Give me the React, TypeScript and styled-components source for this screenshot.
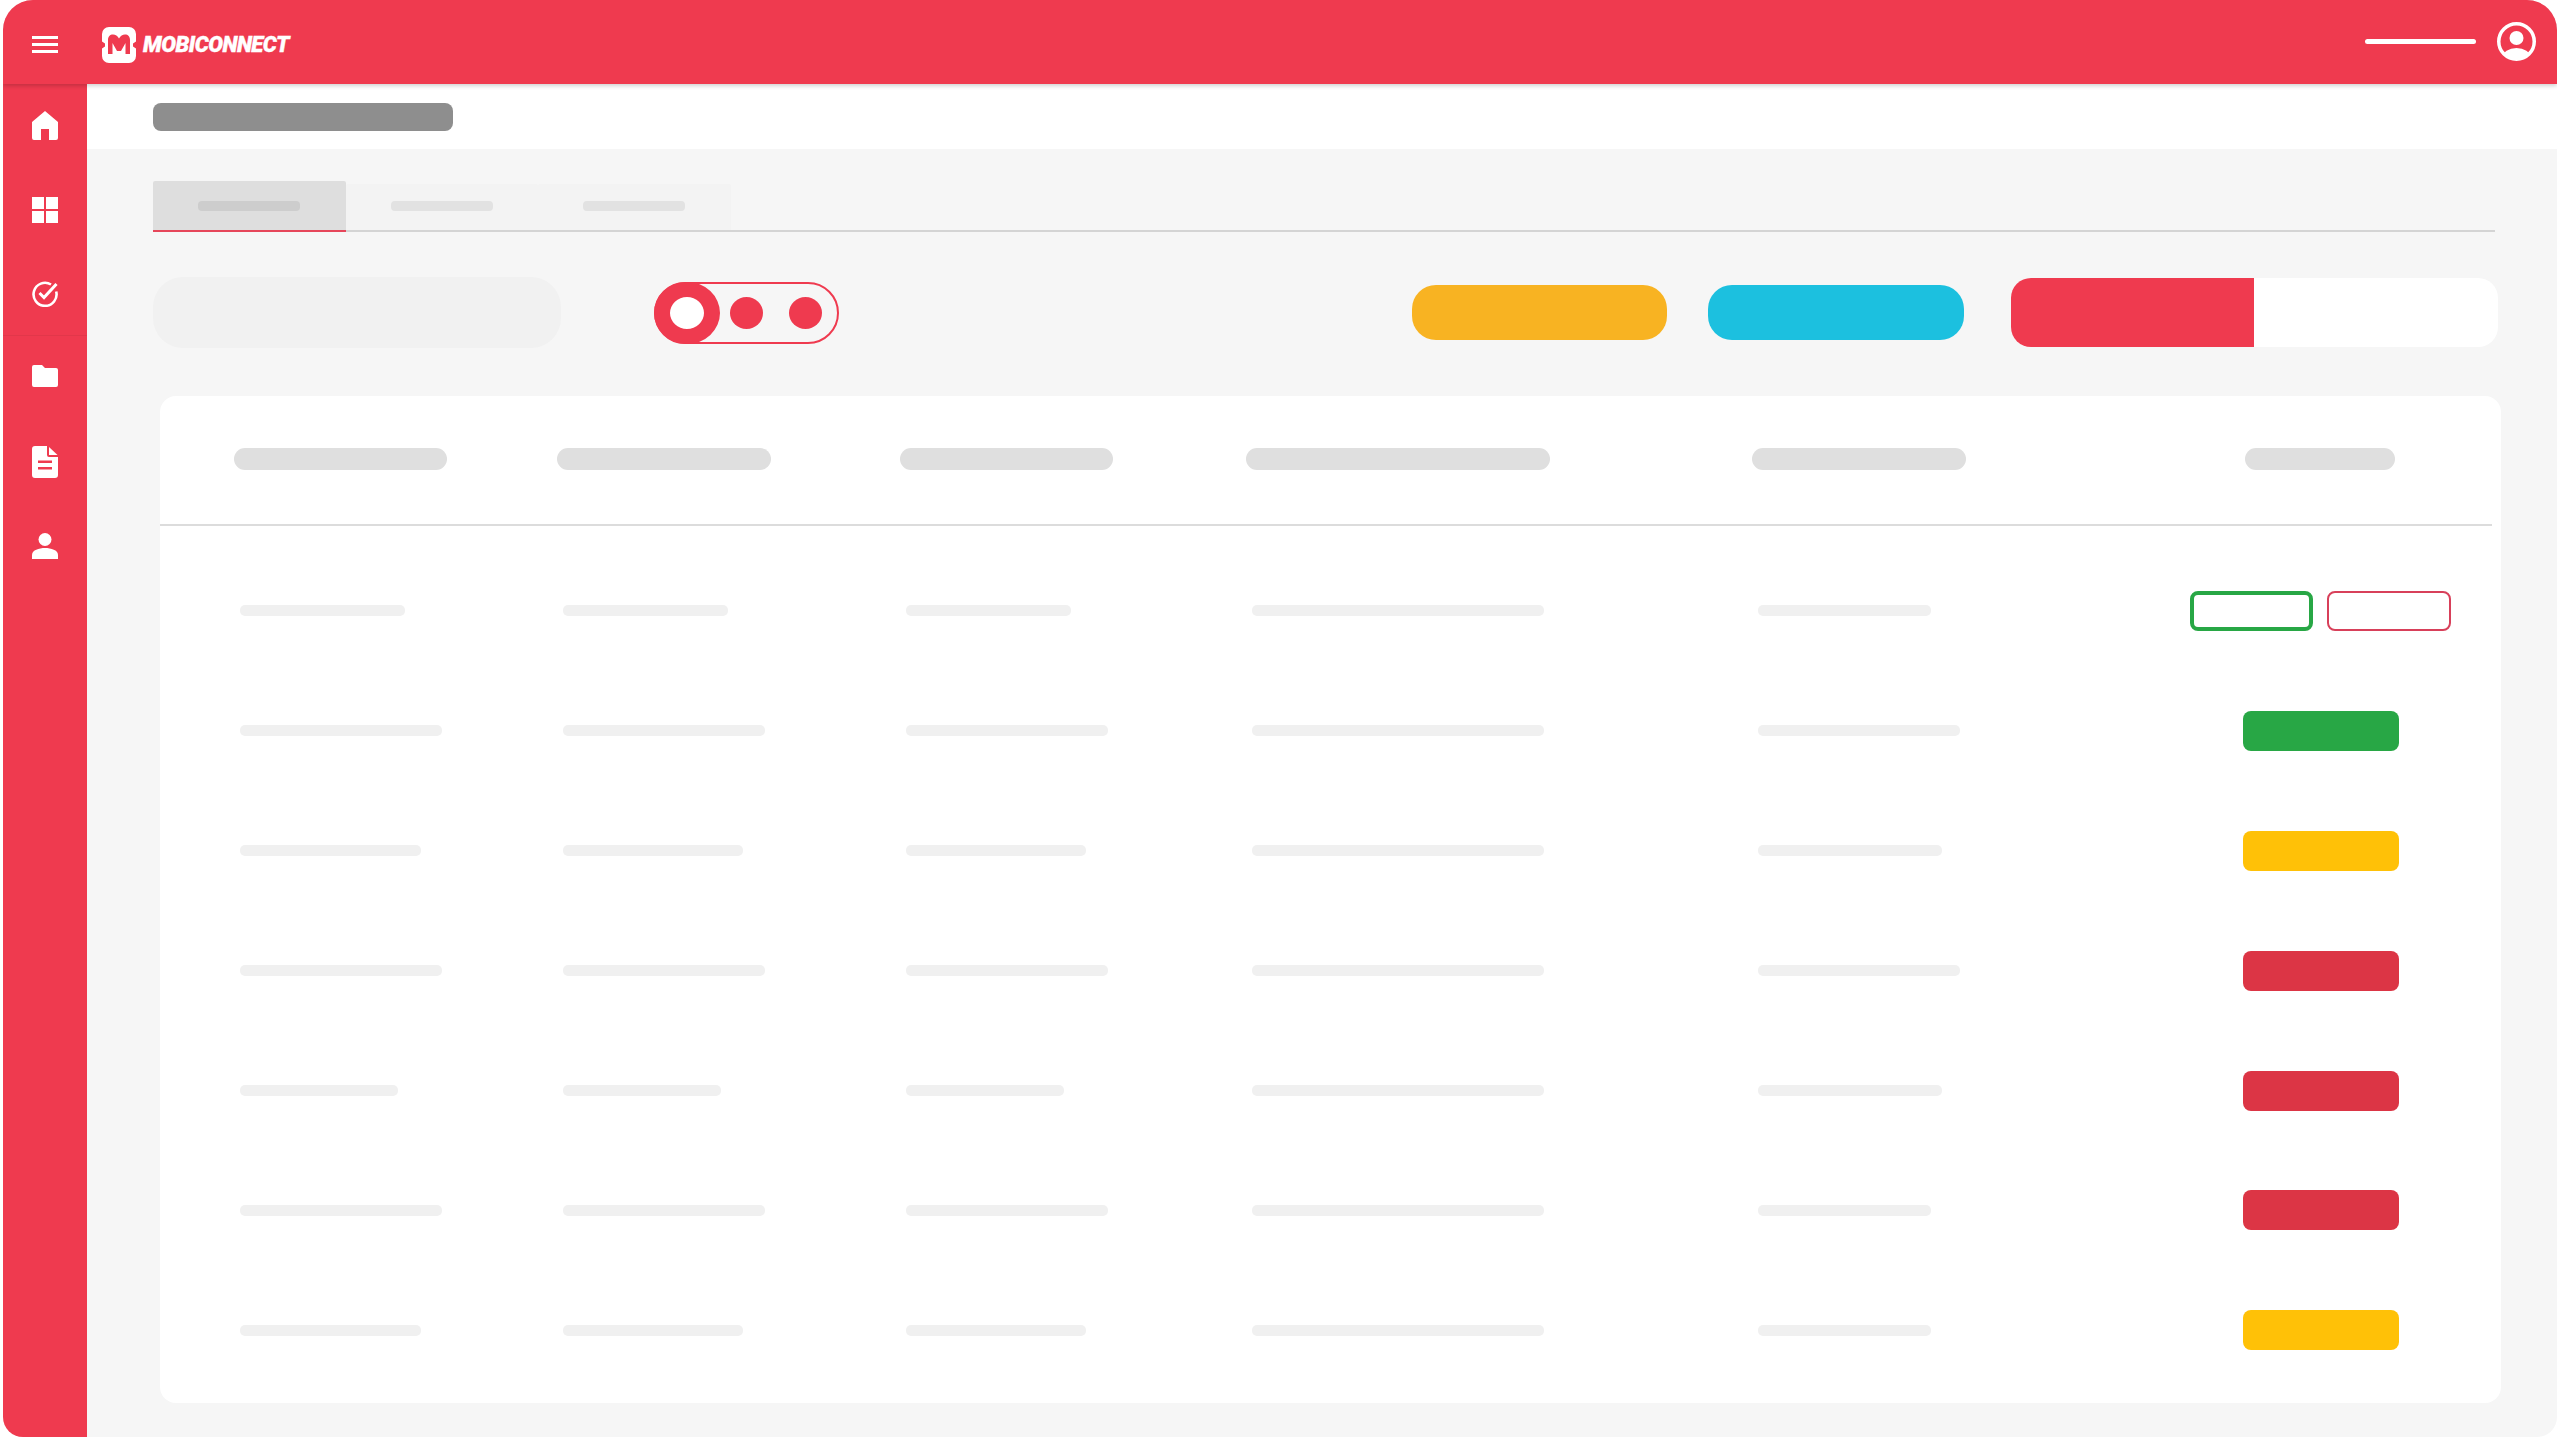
import React from "react";
import styled, { createGlobalStyle } from "styled-components";

const Global = createGlobalStyle`
  html, body { margin: 0; padding: 0; background: #fff; }
  #root { width: 2560px; height: 1437px; }
`;

const RED = "#ef3a4f";

const Frame = styled.div`
  width: 2554px;
  height: 1437px;
  margin-left: 3px;
  border-radius: 30px 30px 20px 20px;
  overflow: hidden;
  display: flex;
  flex-direction: column;
  background: #f6f6f6;
`;

const Header = styled.header`
  position: relative;
  z-index: 2;
  flex: 0 0 84px;
  display: flex;
  align-items: center;
  justify-content: space-between;
  padding: 0 21px 0 29px;
  background: ${RED};
  box-shadow: 0 2px 4px rgba(0, 0, 0, 0.18);
`;

const HeaderLeft = styled.div`
  display: flex;
  align-items: center;
  margin-top: 5px;
`;

const Burger = styled.div`
  width: 26px;
  display: flex;
  flex-direction: column;
  gap: 4px;
  margin-right: 44px;
`;

const BurgerLine = styled.span`
  display: block;
  height: 3px;
  background: #fff;
`;

const Brand = styled.div`
  display: flex;
  align-items: center;
  gap: 7px;
`;

const BrandName = styled.span`
  font-family: Roboto, "Liberation Sans", sans-serif;
  font-weight: 900;
  font-style: italic;
  font-size: 22px;
  line-height: 24px;
  letter-spacing: -0.5px;
  -webkit-text-stroke: 0.4px #fff;
  color: #fff;
`;

const HeaderRight = styled.div`
  display: flex;
  align-items: center;
  gap: 21px;
  margin-top: -1px;
`;

const UserLine = styled.span`
  display: block;
  width: 111px;
  height: 5px;
  border-radius: 3px;
  background: #fff;
`;

const Body = styled.div`
  flex: 1;
  display: flex;
  min-height: 0;
`;

const Sidebar = styled.nav`
  flex: 0 0 84px;
  background: ${RED};
  display: flex;
  flex-direction: column;
`;

const NavItem = styled.div<{ $sep?: boolean; $lift?: boolean }>`
  height: 84px;
  box-sizing: border-box;
  display: flex;
  align-items: center;
  justify-content: center;
  padding-bottom: ${(p) => (p.$lift ? "3px" : "0")};
  border-bottom: 1px solid ${(p) => (p.$sep ? "rgba(0,0,0,0.05)" : "transparent")};
`;

const Main = styled.main`
  flex: 1;
  min-width: 0;
  display: flex;
  flex-direction: column;
`;

const TitleBar = styled.div`
  flex: 0 0 65px;
  background: #fff;
  padding: 19px 0 0 66px;
  box-sizing: border-box;
`;

const Title = styled.div`
  width: 300px;
  height: 28px;
  border-radius: 8px;
  background: #8e8e8e;
`;

const Content = styled.div`
  flex: 1;
  padding: 32px 0 0 66px;
`;

const Tabs = styled.div`
  width: 2342px;
  height: 51px;
  box-sizing: border-box;
  display: flex;
  border-bottom: 2px solid #d4d4d4;
`;

const Tab = styled.div<{ $active?: boolean }>`
  width: 192.5px;
  box-sizing: border-box;
  margin-top: ${(p) => (p.$active ? "0" : "3px")};
  height: ${(p) => (p.$active ? "51px" : "48px")};
  display: flex;
  align-items: center;
  justify-content: center;
  padding-bottom: ${(p) => (p.$active ? "0" : "2px")};
  background: ${(p) => (p.$active ? "#dedede" : "#f3f3f3")};
  border-bottom: 2px solid ${(p) => (p.$active ? "#e6465a" : "#d4d4d4")};
  border-radius: 2px 2px 0 0;
`;

const TabLabel = styled.span<{ $active?: boolean }>`
  display: block;
  width: 102px;
  height: 10px;
  border-radius: 4px;
  background: ${(p) => (p.$active ? "#cdcdcd" : "#e2e2e2")};
`;

const Toolbar = styled.div`
  height: 71px;
  margin-top: 45px;
  display: flex;
  align-items: center;
`;

const Search = styled.div`
  width: 408px;
  height: 71px;
  border-radius: 30px;
  background: #f1f1f1;
  margin-right: 93px;
`;

const Toggle = styled.div`
  width: 185px;
  height: 62px;
  box-sizing: border-box;
  border: 2px solid ${RED};
  border-radius: 31px;
  display: flex;
  align-items: center;
`;

const ToggleThumb = styled.span`
  width: 66px;
  height: 62px;
  margin-left: -2px;
  box-sizing: border-box;
  border-style: solid;
  border-color: ${RED};
  border-width: 15px 16px;
  border-radius: 50%;
  background: #fff;
  flex: none;
`;

const ToggleDot = styled.span<{ $gap: number }>`
  width: 33px;
  height: 32px;
  margin-left: ${(p) => p.$gap}px;
  border-radius: 50%;
  background: ${RED};
  flex: none;
`;

const ActionPill = styled.div<{ $bg: string; $w: number; $gap: number }>`
  width: ${(p) => p.$w}px;
  height: 55px;
  margin-left: ${(p) => p.$gap}px;
  border-radius: 24px;
  background: ${(p) => p.$bg};
`;

const Segment = styled.div`
  width: 487px;
  height: 69px;
  margin-left: 47px;
  border-radius: 20px;
  overflow: hidden;
  display: flex;
  background: #fff;
`;

const SegmentOn = styled.div`
  width: 243px;
  background: ${RED};
`;

const Card = styled.section`
  width: 2341px;
  height: 1007px;
  margin: 48px 0 0 7px;
  border-radius: 16px;
  background: #fff;
`;

const HeadRow = styled.div`
  width: 2332px;
  height: 130px;
  box-sizing: border-box;
  padding-left: 74px;
  display: grid;
  grid-template-columns: 323px 343px 346px 506px 493px 150px;
  align-items: center;
  border-bottom: 2px solid #dcdcdc;
`;

const HeadPill = styled.span<{ $w: number }>`
  display: block;
  width: ${(p) => p.$w}px;
  height: 22px;
  margin-top: -2px;
  border-radius: 11px;
  background: #dfdfdf;
`;

const Rows = styled.div`
  padding: 25px 0 0 80px;
`;

const Row = styled.div`
  height: 119.9px;
  display: grid;
  grid-template-columns: 323px 343px 346px 506px 432px 261px;
  align-items: center;
`;

const Cell = styled.span<{ $w: number }>`
  display: block;
  width: ${(p) => p.$w}px;
  height: 11px;
  border-radius: 5px;
  background: #f0f0f0;
`;

const ActionCell = styled.div`
  display: flex;
  justify-content: center;
  gap: 14px;
`;

const StatusBtn = styled.div<{ $bg: string }>`
  width: 156px;
  height: 40px;
  border-radius: 8px;
  background: ${(p) => p.$bg};
`;

const OutlineBtn = styled.div<{ $color: string; $bw: number; $w: number }>`
  width: ${(p) => p.$w}px;
  height: 40px;
  box-sizing: border-box;
  border: ${(p) => p.$bw}px solid ${(p) => p.$color};
  border-radius: 8px;
  background: #fff;
`;

const Logo = () => (
  <svg width="34" height="36" viewBox="0 0 34 36" aria-hidden="true">
    <path
      fill="#fff"
      d="M7 0H27a7 7 0 0 1 7 7V14.500L31 16.500V19.500L34 21.500V29a7 7 0 0 1-7 7H7a7 7 0 0 1-7-7V21.500L3 19.500V16.500L0 14.500V7a7 7 0 0 1 7-7Z"
    />
    <path
      fill={RED}
      d="M6 27V13C6 9.500 8 7.500 11 7.500C13.500 7.500 15.500 9 17 11.500C18.500 9 20.500 7.500 23 7.500C26 7.500 28 9.500 28 13V27H23.500V16L19 24H15L10.500 16V27Z"
    />
  </svg>
);

const Avatar = () => (
  <svg width="39" height="39" viewBox="0 0 39 39" aria-hidden="true">
    <defs>
      <clipPath id="avatar-clip">
        <circle cx="19.500" cy="19.500" r="17" />
      </clipPath>
    </defs>
    <circle cx="19.500" cy="19.500" r="17.750" fill="none" stroke="#fff" strokeWidth="3.500" />
    <circle cx="19.500" cy="16" r="7" fill="#fff" />
    <ellipse cx="19.500" cy="35" rx="14" ry="9" fill="#fff" clipPath="url(#avatar-clip)" />
  </svg>
);

const HomeIcon = () => (
  <svg width="26" height="29" viewBox="0 0 26 29" aria-hidden="true">
    <path fill="#fff" d="M13 0L26 11V27a2 2 0 0 1-2 2H17V18H9V29H2a2 2 0 0 1-2-2V11Z" />
  </svg>
);

const GridIcon = () => (
  <svg width="26" height="26" viewBox="0 0 26 26" aria-hidden="true">
    <path fill="#fff" d="M0 0H12V12H0ZM14 0H26V12H14ZM0 14H12V26H0ZM14 14H26V26H14Z" />
  </svg>
);

const CheckIcon = () => (
  <svg width="26" height="26" viewBox="0 0 26 26" aria-hidden="true">
    <path
      fill="none"
      stroke="#fff"
      strokeWidth="2.600"
      d="M19 3.500A11.500 11.500 0 1 0 24.200 10.500"
    />
    <path fill="none" stroke="#fff" strokeWidth="3" d="M7.500 12L12 16.500L24.500 3" />
  </svg>
);

const FolderIcon = () => (
  <svg width="26" height="22" viewBox="0 0 26 22" aria-hidden="true">
    <path
      fill="#fff"
      d="M2 0H10L13 3H24a2 2 0 0 1 2 2V20a2 2 0 0 1-2 2H2a2 2 0 0 1-2-2V2a2 2 0 0 1 2-2Z"
    />
  </svg>
);

const DocIcon = () => (
  <svg width="26" height="32" viewBox="0 0 26 32" aria-hidden="true">
    <path
      fill="#fff"
      d="M3 0H15V9a2 2 0 0 0 2 2H26V29a3 3 0 0 1-3 3H3a3 3 0 0 1-3-3V3a3 3 0 0 1 3-3Z"
    />
    <path fill="#fff" d="M17 1L25.500 9H17Z" />
    <path fill={RED} d="M6 14.500H20V17H6ZM6 21H20V23.500H6Z" />
  </svg>
);

const UserIcon = () => (
  <svg width="26" height="26" viewBox="0 0 26 26" aria-hidden="true">
    <circle cx="13" cy="6.500" r="6.500" fill="#fff" />
    <path fill="#fff" d="M0 26V22C0 17 7 15 13 15C19 15 26 17 26 22V26Z" />
  </svg>
);

const navIcons = [HomeIcon, GridIcon, CheckIcon, FolderIcon, DocIcon, UserIcon];

const headWidths = [213, 214, 213, 304, 214, 150];

type Action = "both" | "green" | "yellow" | "red";

const rows: { c: number[]; last: number; action: Action }[] = [
  { c: [165, 165, 165], last: 173, action: "both" },
  { c: [202, 202, 202], last: 202, action: "green" },
  { c: [181, 180, 180], last: 184, action: "yellow" },
  { c: [202, 202, 202], last: 202, action: "red" },
  { c: [158, 158, 158], last: 184, action: "red" },
  { c: [202, 202, 202], last: 173, action: "red" },
  { c: [181, 180, 180], last: 173, action: "yellow" },
];

const statusColor: Record<Exclude<Action, "both">, string> = {
  green: "#28a745",
  yellow: "#ffc107",
  red: "#dc3545",
};

export default function App() {
  return (
    <>
      <Global />
      <Frame>
        <Header>
          <HeaderLeft>
            <Burger>
              <BurgerLine />
              <BurgerLine />
              <BurgerLine />
            </Burger>
            <Brand>
              <Logo />
              <BrandName>MOBICONNECT</BrandName>
            </Brand>
          </HeaderLeft>
          <HeaderRight>
            <UserLine />
            <Avatar />
          </HeaderRight>
        </Header>
        <Body>
          <Sidebar>
            {navIcons.map((Icon, i) => (
              <NavItem key={i} $sep={i === 2} $lift={i === 3}>
                <Icon />
              </NavItem>
            ))}
          </Sidebar>
          <Main>
            <TitleBar>
              <Title />
            </TitleBar>
            <Content>
              <Tabs>
                <Tab $active>
                  <TabLabel $active />
                </Tab>
                <Tab>
                  <TabLabel />
                </Tab>
                <Tab>
                  <TabLabel />
                </Tab>
              </Tabs>
              <Toolbar>
                <Search />
                <Toggle>
                  <ToggleThumb />
                  <ToggleDot $gap={10} />
                  <ToggleDot $gap={26} />
                </Toggle>
                <ActionPill $bg="#f8b322" $w={255} $gap={573} />
                <ActionPill $bg="#1cc0df" $w={256} $gap={41} />
                <Segment>
                  <SegmentOn />
                </Segment>
              </Toolbar>
              <Card>
                <HeadRow>
                  {headWidths.map((w, i) => (
                    <HeadPill key={i} $w={w} />
                  ))}
                </HeadRow>
                <Rows>
                  {rows.map((r, i) => (
                    <Row key={i}>
                      {r.c.map((w, j) => (
                        <Cell key={j} $w={w} />
                      ))}
                      <Cell $w={292} />
                      <Cell $w={r.last} />
                      <ActionCell>
                        {r.action === "both" ? (
                          <>
                            <OutlineBtn $color="#28a745" $bw={4} $w={123} />
                            <OutlineBtn $color="#d8405a" $bw={2} $w={124} />
                          </>
                        ) : (
                          <StatusBtn $bg={statusColor[r.action]} />
                        )}
                      </ActionCell>
                    </Row>
                  ))}
                </Rows>
              </Card>
            </Content>
          </Main>
        </Body>
      </Frame>
    </>
  );
}
